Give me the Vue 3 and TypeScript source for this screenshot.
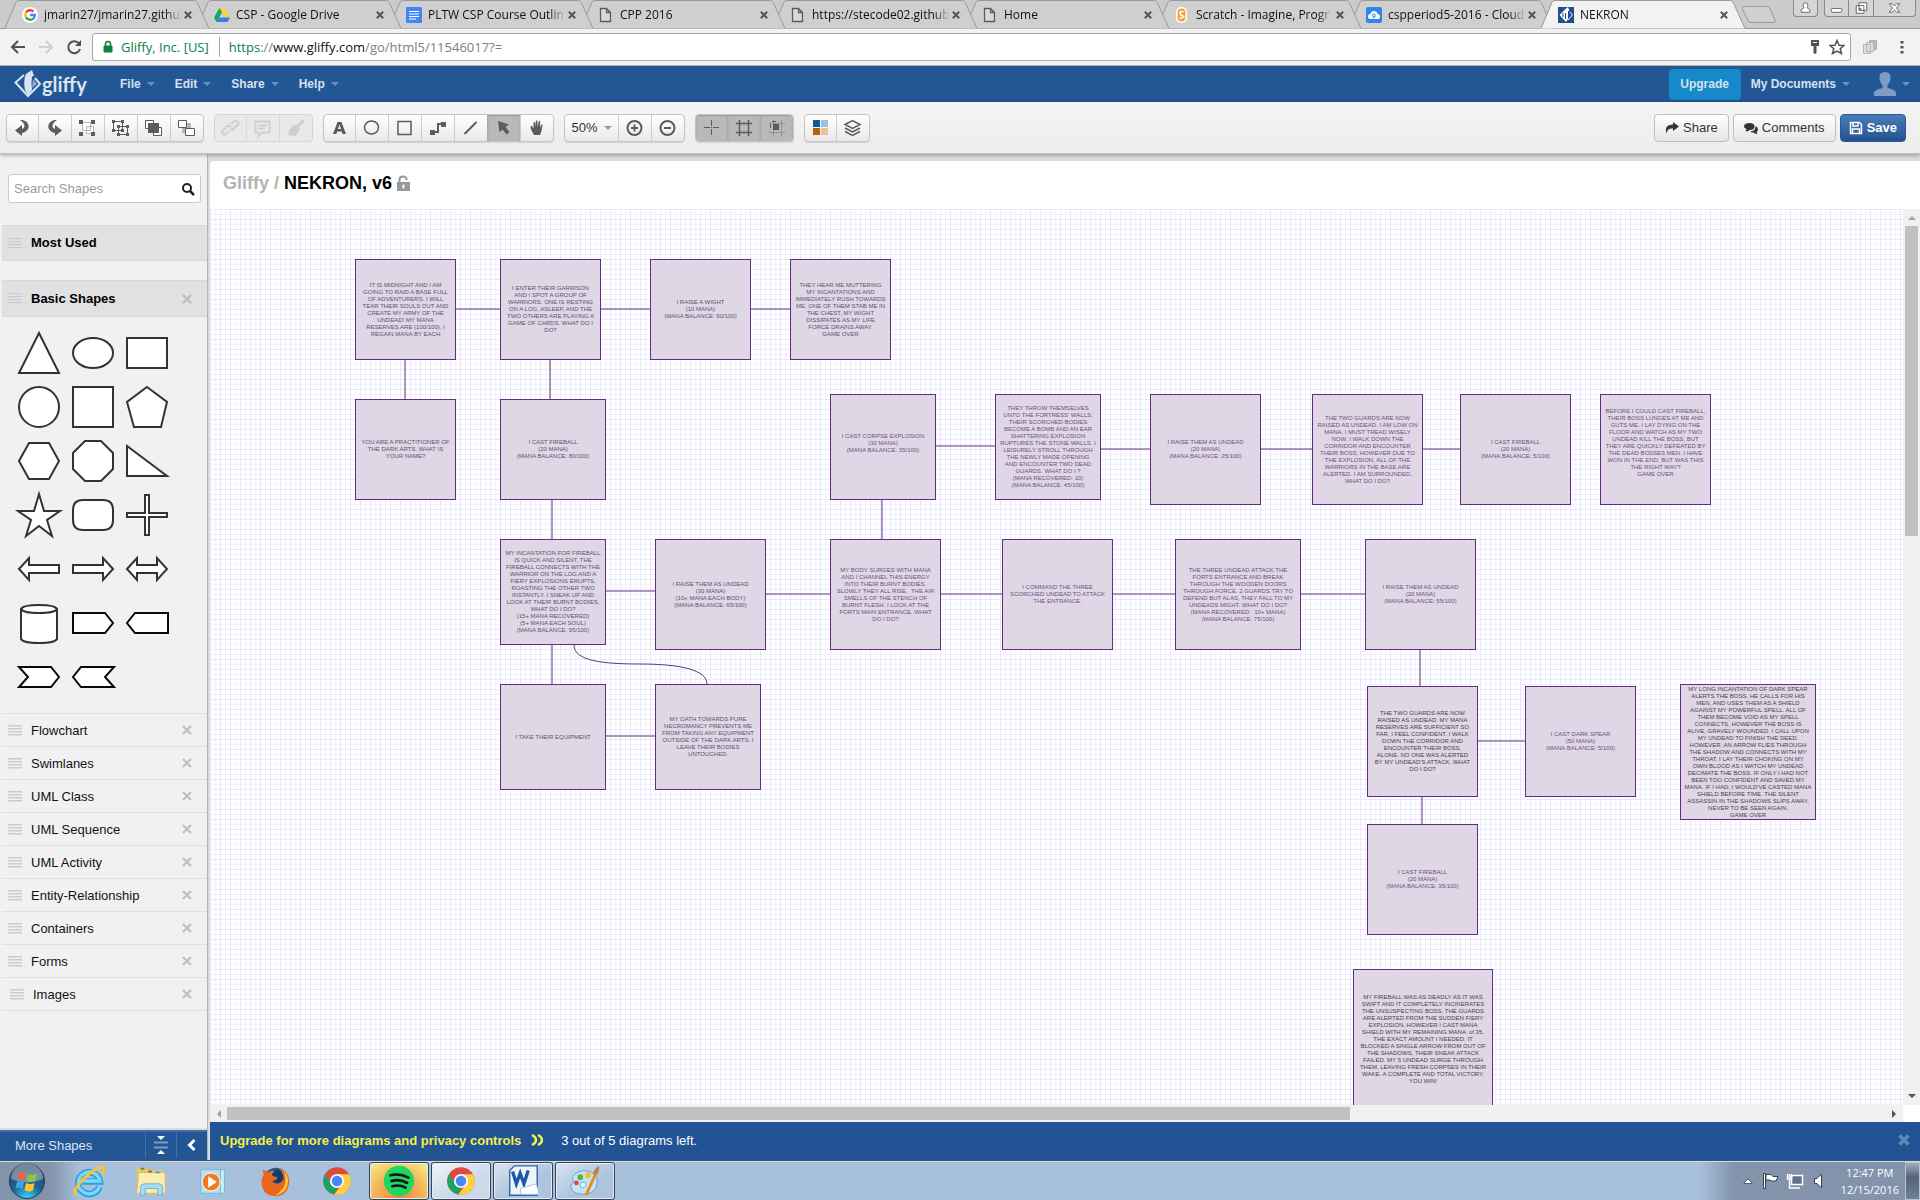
<script setup lang="ts">
interface Part { d: string; f?: string; s?: string; w?: number }
interface Tool { name: string; parts: Part[]; active?: boolean }
interface ToolGroup { name: string; disabled?: boolean; pressed?: boolean; zoom?: boolean; tools: Tool[] }
interface Node { x: number; y: number; w: number; h: number; tone: string; lines: string[] }

const G = '#5c5c5c'

const tabs = [
  { title: 'jmarin27/jmarin27.github', icon: 'google' },
  { title: 'CSP - Google Drive', icon: 'drive' },
  { title: 'PLTW CSP Course Outlin', icon: 'docs' },
  { title: 'CPP 2016', icon: 'page' },
  { title: 'https://stecode02.github', icon: 'page' },
  { title: 'Home', icon: 'page' },
  { title: 'Scratch - Imagine, Progr', icon: 'scratch' },
  { title: 'cspperiod5-2016 - Cloud', icon: 'cloud' },
  { title: 'NEKRON', icon: 'gliffy' },
]

const menus = ['File', 'Edit', 'Share', 'Help']

const groups: ToolGroup[] = [
  {
    name: 'Edit',
    tools: [
      { name: 'Undo', parts: [{ d: 'M14 6C23 5 27 16 16 19V22L9 16.500L16 11V15C20 14 19 9 14 6Z', f: G }] },
      { name: 'Redo', parts: [{ d: 'M19 6C10 5 6 16 17 19V22L24 16.500L17 11V15C13 14 14 9 19 6Z', f: G }] },
      { name: 'Group', parts: [{ d: 'M11.500 8.500H19.500V16.500H11.500ZM15.500 12.500H22.500V19.500H15.500Z', f: '#fff', s: '#b5b5b5' }, { d: 'M8 6H12V10H8ZM20 6H24V10H20ZM8 18H12V22H8ZM20 18H24V22H20Z', f: G }] },
      { name: 'Ungroup', parts: [{ d: 'M9.500 7.500H18.500V16.500H9.500ZM14.500 12.500H23.500V20.500H14.500Z', s: G }, { d: 'M8 6H11V9H8ZM17 6H20V9H17ZM8 15H11V18H8ZM17 15H20V18H17ZM13 11H16V14H13ZM22 11H25V14H22ZM13 19H16V22H13ZM22 19H25V22H22Z', f: G }] },
      { name: 'Bring to front', parts: [{ d: 'M8.500 6.500H16.500V14.500H8.500ZM16.500 13.500H24.500V21.500H16.500Z', f: '#fff', s: G }, { d: 'M11 9H22V19H11Z', f: G }] },
      { name: 'Send to back', parts: [{ d: 'M12 9H21V19H12Z', f: '#b5b5b5' }, { d: 'M8.500 6.500H16.500V13.500H8.500ZM15.500 14.500H24.500V21.500H15.500Z', f: '#fff', s: G }] },
    ],
  },
  {
    name: 'Attach',
    disabled: true,
    tools: [
      { name: 'Link', parts: [{ d: 'M15 17L12 20Q10 21.500 8.500 19.500T9.500 16L13 12.500Q15 11 17 13M17 10L20 7.500Q22.500 6 24 8T23 11.500L19.500 15Q17.500 16.500 16 14.500', s: '#cfcfcf', w: 2 }] },
      { name: 'Note', parts: [{ d: 'M9.500 7.500H23.500V18.500H16L12.500 22V18.500H9.500ZM12 11.500H21M12 14.500H19', s: '#cfcfcf', w: 2 }] },
      { name: 'Format painter', parts: [{ d: 'M24 5L26 7L20 13L21 16L16 22L9 21L8 20L11 19L9 18L14 11L18 11Z', f: '#cfcfcf' }] },
    ],
  },
  {
    name: 'Draw',
    tools: [
      { name: 'Text', parts: [{ d: 'M10 20L14.500 8H18.500L23 20H19.500L18.700 17.500H14.200L13.400 20ZM15 15H18L16.500 10.500Z', f: G }] },
      { name: 'Ellipse', parts: [{ d: 'M9.500 13.500A7 6.500 0 1 1 23.500 13.500A7 6.500 0 1 1 9.500 13.500Z', s: G, w: 1.5 }] },
      { name: 'Rectangle', parts: [{ d: 'M10 7.500H23V20.500H10Z', s: G, w: 1.5 }] },
      { name: 'Connector', parts: [{ d: 'M11 18H17V10H22', s: G, w: 2 }, { d: 'M9 16H14V21H9ZM20 8H25V13H20Z', f: G }] },
      { name: 'Line', parts: [{ d: 'M10.500 20L22.500 8', s: G, w: 2 }] },
      { name: 'Pointer', active: true, parts: [{ d: 'M11 7L22 10.500L18.500 13L22.500 18L19.500 20.500L15.500 15.500L12.500 18.500Z', f: G }] },
      { name: 'Pan', parts: [{ d: 'M14 21L11 15.500L10.500 12H12L13.500 14.500V8.500L15 8L15.800 13V6.500H17.300L17.800 13L18.800 7H20.200L20 13.500L21.500 10.500H22.700L21.500 17L20 21Z', f: G }] },
    ],
  },
  {
    name: 'Zoom',
    zoom: true,
    tools: [
      { name: 'Zoom in', parts: [{ d: 'M9.500 14A7 7 0 1 1 23.500 14A7 7 0 1 1 9.500 14ZM13 14H20M16.500 10.500V17.500', s: G, w: 2 }] },
      { name: 'Zoom out', parts: [{ d: 'M9.500 14A7 7 0 1 1 23.500 14A7 7 0 1 1 9.500 14ZM13 14H20', s: G, w: 2 }] },
    ],
  },
  {
    name: 'Guides',
    pressed: true,
    tools: [
      { name: 'Drawing guides', parts: [{ d: 'M9 13.500H15M18 13.500H24M16.500 6V12M16.500 15V21M16 13.500H17', s: G }] },
      { name: 'Grid', parts: [{ d: 'M9 9.500H25M9 18.500H25M12.500 6V22M21.500 6V22', s: G, w: 1.5 }] },
      { name: 'Snap to grid', parts: [{ d: 'M9 9.500H25M9 18.500H25M13.500 6V22M21.500 6V22', s: '#929292' }, { d: 'M13 10H19V16H13ZM12 7H16V8H12ZM10 10H11V14H10Z', f: G }] },
    ],
  },
  {
    name: 'Style',
    tools: [
      { name: 'Themes', parts: [{ d: 'M9 6H16V13H9Z', f: '#0b5a9d' }, { d: 'M17 6H24V13H17Z', f: '#9cc0dc' }, { d: 'M9 14H16V21H9Z', f: '#b75d0b' }, { d: 'M17 14H24V21H17Z', f: '#e5c299' }] },
      { name: 'Layers', parts: [{ d: 'M9 10.500L16.500 6.500L24 10.500L16.500 14.500ZM9 14L16.500 18L24 14M9 17.500L16.500 21.500L24 17.500', s: G, w: 1.5 }] },
    ],
  },
]

const shapes = [
  { name: 'Triangle', d: 'M27 7L47 47H7Z' },
  { name: 'Ellipse', d: 'M7 27A20 15 0 1 1 47 27A20 15 0 1 1 7 27Z' },
  { name: 'Rectangle', d: 'M7 12H47V42H7Z' },
  { name: 'Circle', d: 'M7 27A20 20 0 1 1 47 27A20 20 0 1 1 7 27Z' },
  { name: 'Square', d: 'M7 7H47V47H7Z' },
  { name: 'Pentagon', d: 'M27 7L47 22L41 47H14L7 22Z' },
  { name: 'Hexagon', d: 'M7 27L17 9H37L47 27L37 45H17Z' },
  { name: 'Octagon', d: 'M19 7H35L47 19V35L35 47H19L7 35V19Z' },
  { name: 'Right triangle', d: 'M7 12V42H47Z' },
  { name: 'Star', d: 'M27 6L32 23H48L35 32L40 48L27 38L14 48L19 32L6 23H22Z' },
  { name: 'Rounded rectangle', d: 'M17 12H37Q47 12 47 22V32Q47 42 37 42H17Q7 42 7 32V22Q7 12 17 12Z' },
  { name: 'Plus', d: 'M25 7H29V25H47V29H29V47H25V29H7V25H25Z' },
  { name: 'Left arrow', d: 'M7 27L17 16V23H47V31H17V38Z' },
  { name: 'Right arrow', d: 'M47 27L37 16V23H7V31H37V38Z' },
  { name: 'Double arrow', d: 'M7 27L17 16V23H37V16L47 27L37 38V31H17V38Z' },
  { name: 'Cylinder', d: 'M9 13V43Q11 47 27 47T45 43V13Q43 9 27 9T9 13Q11 17 27 17T45 13' },
  { name: 'Pointer right', d: 'M7 17H39L47 27L39 37H7Z', dark: true },
  { name: 'Pointer left', d: 'M15 17H48V37H15L7 27Z', dark: true },
  { name: 'Chevron right', d: 'M7 17H39L47 27L39 37H7L16 27Z', dark: true },
  { name: 'Chevron left', d: 'M15 17H48L39 27L48 37H15L7 27Z', dark: true },
]

const categories = ['Flowchart', 'Swimlanes', 'UML Class', 'UML Sequence', 'UML Activity', 'Entity-Relationship', 'Containers', 'Forms', 'Images']

/* Node and edge coordinates are relative to the canvas origin. */
const nodes: Node[] = [
  { x: 145, y: 50, w: 101, h: 101, tone: 'slate', lines: ['IT IS MIDNIGHT AND I AM', 'GOING TO RAID A BASE FULL', 'OF ADVENTURERS. I WILL', 'TEAR THEIR SOULS OUT AND', 'CREATE MY ARMY OF THE', 'UNDEAD! MY MANA', 'RESERVES ARE (100/100), I', 'REGAIN MANA BY EACH'] },
  { x: 290, y: 50, w: 101, h: 101, tone: 'slate', lines: ['I ENTER THEIR GARRISON', 'AND I SPOT A GROUP OF', 'WARRIORS. ONE IS RESTING', 'ON A LOG, ASLEEP, AND THE', 'TWO OTHERS ARE PLAYING A', 'GAME OF CARDS. WHAT DO I', 'DO?'] },
  { x: 440, y: 50, w: 101, h: 101, tone: 'slate', lines: ['I RAISE A WIGHT', '(10 MANA)', '(MANA BALANCE: 90/100)'] },
  { x: 580, y: 50, w: 101, h: 101, tone: 'slate', lines: ['THEY HEAR ME MUTTERING', 'MY INCANTATIONS AND', 'IMMEDIATELY RUSH TOWARDS', 'ME. ONE OF THEM STAB ME IN', 'THE CHEST, MY WIGHT', 'DISSIPATES AS MY LIFE', 'FORCE DRAINS AWAY.', 'GAME OVER'] },
  { x: 145, y: 190, w: 101, h: 101, tone: 'slate', lines: ['YOU ARE A PRACTITIONER OF', 'THE DARK ARTS. WHAT IS', 'YOUR NAME?'] },
  { x: 290, y: 190, w: 106, h: 101, tone: 'slate', lines: ['I CAST FIREBALL', '(20 MANA)', '(MANA BALANCE: 80/100)'] },
  { x: 620, y: 185, w: 106, h: 106, tone: 'plum', lines: ['I CAST CORPSE EXPLOSION', '(30 MANA)', '(MANA BALANCE: 35/100)', ''] },
  { x: 785, y: 185, w: 106, h: 106, tone: 'plum', lines: ['THEY THROW THEMSELVES', "UNTO THE FORTRESS' WALLS,", 'THEIR SCORCHED BODIES', 'BECOME A BOMB AND AN EAR', 'SHATTERING EXPLOSION', 'RUPTURES THE STONE WALLS. I', 'LEISURELY STROLL THROUGH', 'THE NEWLY MADE OPENING', 'AND ENCOUNTER TWO DEAD', 'GUARDS. WHAT DO I ?', '(MANA RECOVERED: 10)', '(MANA BALANCE: 45/100)'] },
  { x: 940, y: 185, w: 111, h: 111, tone: 'plum', lines: ['I RAISE THEM AS UNDEAD', '(20 MANA)', '(MANA BALANCE: 25/100)'] },
  { x: 1102, y: 185, w: 111, h: 111, tone: 'plum', lines: ['THE TWO GUARDS ARE NOW', 'RAISED AS UNDEAD. I AM LOW ON', 'MANA, I MUST TREAD WISELY', 'NOW. I WALK DOWN THE', 'CORRIDOR AND ENCOUNTER', 'THEIR BOSS, HOWEVER DUE TO', 'THE EXPLOSION, ALL OF THE', 'WARRIORS IN THE BASE ARE', 'ALERTED. I AM SURROUNDED,', 'WHAT DO I DO?'] },
  { x: 1250, y: 185, w: 111, h: 111, tone: 'plum', lines: ['I CAST FIREBALL', '(20 MANA)', '(MANA BALANCE: 5/100)'] },
  { x: 1390, y: 185, w: 111, h: 111, tone: 'plum', lines: ['BEFORE I COULD CAST FIREBALL,', 'THEIR BOSS LUNGES AT ME AND', 'GUTS ME. I LAY DYING ON THE', 'FLOOR AND WATCH AS MY TWO', 'UNDEAD KILL THE BOSS, BUT', 'THEY ARE QUICKLY DEFEATED BY', 'THE DEAD BOSSES MEN. I HAVE', 'WON IN THE END, BUT WAS THIS', 'THE RIGHT WAY?', 'GAME OVER', '', ''] },
  { x: 290, y: 330, w: 106, h: 106, tone: 'slate', lines: ['MY INCANTATION FOR FIREBALL', 'IS QUICK AND SILENT, THE', 'FIREBALL CONNECTS WITH THE', 'WARRIOR ON THE LOG AND A', 'FIERY EXPLOSIONS ERUPTS,', 'ROASTING THE OTHER TWO', 'INSTANTLY. I SNEAK UP AND', 'LOOK AT THEIR BURNT BODIES,', 'WHAT DO I DO?', '(15+ MANA RECOVERED)', '(5+ MANA EACH SOUL)', '(MANA BALANCE: 95/100)'] },
  { x: 445, y: 330, w: 111, h: 111, tone: 'slate', lines: ['I RAISE THEM AS UNDEAD', '(30 MANA)', '(10+ MANA EACH BODY)', '(MANA BALANCE: 65/100)'] },
  { x: 620, y: 330, w: 111, h: 111, tone: 'plum', lines: ['MY BODY SURGES WITH MANA', 'AND I CHANNEL THIS ENERGY', 'INTO THEIR BURNT BODIES.', 'SLOWLY THEY ALL RISE,  THE AIR', 'SMELLS OF THE STENCH OF', 'BURNT FLESH. I LOOK AT THE', 'FORTS MAIN ENTRANCE, WHAT', 'DO I DO?'] },
  { x: 792, y: 330, w: 111, h: 111, tone: 'plum', lines: ['I COMMAND THE THREE', 'SCORCHED UNDEAD TO ATTACK', 'THE ENTRANCE.'] },
  { x: 965, y: 330, w: 126, h: 111, tone: 'plum', lines: ['THE THREE UNDEAD ATTACK THE', 'FORTS ENTRANCE AND BREAK', 'THROUGH THE WOODEN DOORS', 'THROUGH FORCE. 2 GUARDS TRY TO', 'DEFEND BUT ALAS, THEY FALL TO MY', 'UNDEADS MIGHT. WHAT DO I DO?', '(MANA RECOVERED:  10+ MANA)', '(MANA BALANCE: 75/100)'] },
  { x: 1155, y: 330, w: 111, h: 111, tone: 'plum', lines: ['I RAISE THEM AS UNDEAD', '(20 MANA)', '(MANA BALANCE: 55/100)'] },
  { x: 290, y: 475, w: 106, h: 106, tone: 'slate', lines: ['I TAKE THEIR EQUIPMENT'] },
  { x: 445, y: 475, w: 106, h: 106, tone: 'slate', lines: ['MY OATH TOWARDS PURE', 'NECROMANCY PREVENTS ME', 'FROM TAKING ANY EQUIPMENT', 'OUTSIDE OF THE DARK ARTS. I', 'LEAVE THEIR BODIES', 'UNTOUCHED.'] },
  { x: 1157, y: 477, w: 111, h: 111, tone: 'ink', lines: ['THE TWO GUARDS ARE NOW', 'RAISED AS UNDEAD. MY MANA', 'RESERVES ARE SUFFICIENT SO', 'FAR, I FEEL CONFIDENT. I WALK', 'DOWN THE CORRIDOR AND', 'ENCOUNTER THEIR BOSS,', 'ALONE. NO ONE WAS ALERTED', "BY MY UNDEAD'S ATTACK. WHAT", 'DO I DO?'] },
  { x: 1315, y: 477, w: 111, h: 111, tone: 'plum', lines: ['I CAST DARK SPEAR', '(50 MANA)', '(MANA BALANCE: 5/100)'] },
  { x: 1470, y: 475, w: 136, h: 136, tone: 'ink', lines: ['MY LONG INCANTATION OF DARK SPEAR', 'ALERTS THE BOSS. HE CALLS FOR HIS', 'MEN, AND USES THEM AS A SHIELD', 'AGAINST MY POWERFUL SPELL. ALL OF', 'THEM BECOME VOID AS MY SPELL', 'CONNECTS, HOWEVER THE BOSS IS', 'ALIVE, GRAVELY WOUNDED. I CALL UPON', 'MY UNDEAD TO FINISH THE DEED.', 'HOWEVER, AN ARROW FLIES THROUGH', 'THE SHADOW AND CONNECTS WITH MY', 'THROAT. I LAY THEIR CHOKING ON MY', 'OWN BLOOD AS I WATCH MY UNDEAD', 'DECIMATE THE BOSS. IF ONLY I HAD NOT', 'BEEN TOO CONFIDENT AND SAVED MY', "MANA. IF I HAD, I WOULD'VE CASTED MANA", 'SHIELD BEFORE TIME. THE SILENT', 'ASSASSIN IN THE SHADOWS SLIPS AWAY,', 'NEVER TO BE SEEN AGAIN.', 'GAME OVER'] },
  { x: 1157, y: 615, w: 111, h: 111, tone: 'plum', lines: ['I CAST FIREBALL', '(20 MANA)', '(MANA BALANCE: 35/100)'] },
  { x: 1143, y: 760, w: 140, h: 140, tone: 'ink', lines: ['MY FIREBALL WAS AS DEADLY AS IT WAS', 'SWIFT AND IT COMPLETELY INCINERATES', 'THE UNSUSPECTING BOSS. THE GUARDS', 'ARE ALERTED FROM THE SUDDEN FIERY', 'EXPLOSION, HOWEVER I CAST MANA', 'SHIELD WITH MY REMAINING MANA  of 35.', 'THE EXACT AMOUNT I NEEDED. IT', 'BLOCKED A SINGLE ARROW FROM OUT OF', 'THE SHADOWS, THEIR SNEAK ATTACK', 'FAILED. MY 5 UNDEAD SURGE THROUGH', 'THEM, LEAVING FRESH CORPSES IN THEIR', 'WAKE. A COMPLETE AND TOTAL VICTORY.', 'YOU WIN!'] },
]

const edges = [
  'M246 100H290', 'M391 100H440', 'M541 100H580', 'M195 151V190', 'M340 151V190', 'M342 291V330',
  'M726 237H785', 'M891 240H940', 'M1051 240H1102', 'M1213 240H1250', 'M672 291V330',
  'M396 382H445', 'M556 385H620', 'M731 385H792', 'M903 385H965', 'M1091 385H1155',
  'M342 436V475', 'M364 436C364 452 393 455 430 455C471 455 497 461 497 475', 'M396 527H445',
  'M1210 441V477', 'M1212 588V615', 'M1268 532H1315',
]
</script>

<template>
  <div class="screen">
    <header class="browser">
      <div class="tab-strip">
        <div v-for="(t, i) in tabs" :key="t.title" class="tab" :class="{ current: i === 8 }" :style="{ zIndex: i === 8 ? 20 : 10 - i }">
          <svg class="tab-shape" viewBox="0 0 204 29" preserveAspectRatio="none"><path d="M0 28.500L11 2Q12 .5 14 .5H189Q191 .5 192 2L204 28.500" /></svg>
          <svg v-if="t.icon === 'google'" class="fav" viewBox="0 0 16 16"><circle cx="8" cy="8" r="8" fill="#fff" /><g fill="none" stroke-width="2.400"><path d="M4 5.500A5 5 0 0 1 11.500 4.500" stroke="#ea4335" /><path d="M4 5.500A5 5 0 0 0 4 10.500" stroke="#fbbc05" /><path d="M4 10.500A5 5 0 0 0 11.300 11.600" stroke="#34a853" /><path d="M8 8H12.800Q12.700 10.500 11.300 11.600" stroke="#4285f4" /></g></svg>
          <svg v-else-if="t.icon === 'drive'" class="fav" viewBox="0 0 16 16"><path d="M5.500 1H10.500L16 10.500H11Z" fill="#ffcf48" /><path d="M5.500 1L8 5.500L2.600 15L0 10.500Z" fill="#11a861" /><path d="M5.200 10.500H16L13.500 15H2.600Z" fill="#3b7de8" /></svg>
          <svg v-else-if="t.icon === 'docs'" class="fav" viewBox="0 0 16 16"><rect width="16" height="16" rx="1" fill="#4285f4" /><path d="M3 4.500H13M3 7H13M3 9.500H13M3 12H10" stroke="#fff" /></svg>
          <svg v-else-if="t.icon === 'page'" class="fav" viewBox="0 0 16 16"><path d="M2.500 1.500H8.500L12.500 5.500V14.500H2.500ZM8.500 1.500V5.500H12.500" fill="#d8d8d8" stroke="#5a5a5a" stroke-width="1.300" /></svg>
          <svg v-else-if="t.icon === 'scratch'" class="fav" viewBox="0 0 16 16"><rect x="2" width="11" height="16" rx="5" fill="#fff" /><rect x="3.500" y="1.500" width="8" height="13" rx="4" fill="#f7a236" /><path d="M9.500 5Q6 3.500 6 6T9 9T5.500 11.500" fill="none" stroke="#fff" stroke-width="1.500" /></svg>
          <svg v-else-if="t.icon === 'cloud'" class="fav" viewBox="0 0 16 16"><rect width="16" height="16" rx="2" fill="#2c86ec" /><path d="M4 12Q1.500 11.500 2 9T4.500 7Q5 4 8 4T11.500 7Q14 7 14 9.500T12 12Z" fill="#fff" /><path d="M9 9.500A1.500 1.500 0 1 1 9 7.500V9.500L7.500 11.500" fill="none" stroke="#2c86ec" /></svg>
          <svg v-else class="fav" viewBox="0 0 16 16"><rect width="16" height="16" fill="#1d4f91" /><path d="M7.500 2L10 0L11.500 4H10V12L8 15L1.500 8Z" fill="#fff" /><path d="M12 5L14.500 8L10 13" fill="none" stroke="#fff" /><path d="M5 6V10M7.500 6V12" stroke="#1d4f91" /></svg>
          <button class="tab-title">{{ t.title }}</button>
          <button class="tab-close" aria-label="Close tab"><svg viewBox="0 0 8 8"><path d="M.8 .8L7.200 7.200M7.200 .8L.8 7.200" /></svg></button>
        </div>
        <button class="new-tab" aria-label="New tab"><svg viewBox="0 0 36 19"><path d="M4 1.500H26Q28 1.500 29 3.500L34 15Q35 17.500 32 17.500H10Q8 17.500 7 15.500L1.500 4Q1 1.500 4 1.500Z" /></svg></button>
        <div class="window-buttons">
          <button class="wb user" aria-label="Profile"><svg viewBox="0 0 24 16"><path d="M7.500 12.500V10L10.500 7.500Q9.500 6.500 9.500 5Q9.500 2.500 12 2.500T14.500 5Q14.500 6.500 13.500 7.500L16.500 10V12.500Z" fill="#fff" stroke="#666" /></svg></button>
          <div class="wb-set">
            <button class="wb" aria-label="Minimize"><svg viewBox="0 0 24 16"><rect x="6.500" y="8.500" width="11" height="4" rx="1" fill="#fff" stroke="#666" /></svg></button>
            <button class="wb" aria-label="Restore"><svg viewBox="0 0 24 16"><path d="M9.500 2.500H17.500V10.500H9.500ZM6.500 5.500H14.500V13.500H6.500ZM9.500 8.500H11.500V10.500H9.500Z" fill="#fff" stroke="#666" /></svg></button>
            <button class="wb wide" aria-label="Close"><svg viewBox="0 0 24 16"><path d="M6.500 3.500H9.500L12 6L14.500 3.500H17.500L14 8L17.500 12.500H14.500L12 10L9.500 12.500H6.500L10 8Z" fill="#fff" stroke="#666" /></svg></button>
          </div>
        </div>
      </div>
      <div class="address-row">
        <button class="nav" aria-label="Back"><svg viewBox="0 0 16 16"><path d="M15 8H2M8 2L2 8L8 14" stroke="#505050" stroke-width="2" fill="none" /></svg></button>
        <button class="nav" aria-label="Forward"><svg viewBox="0 0 16 16"><path d="M1 8H14M8 2L14 8L8 14" stroke="#cfcfcf" stroke-width="2" fill="none" /></svg></button>
        <button class="nav" aria-label="Reload"><svg viewBox="0 0 16 16"><path d="M13 4.500A6 6 0 1 0 14 10" stroke="#505050" stroke-width="2" fill="none" /><path d="M15 1V7H9Z" fill="#505050" /></svg></button>
        <div class="omnibox">
          <svg class="lock" viewBox="0 0 10 14"><path d="M1 6H9V12H1Z" fill="#0b8043" stroke="#0b8043" /><path d="M2.500 6V4Q2.500 1.500 5 1.500T7.500 4V6" fill="none" stroke="#0b8043" stroke-width="1.500" /></svg>
          <span class="cert">Gliffy, Inc. [US]</span>
          <span class="url"><span class="https">https</span>://<span class="host">www.gliffy.com</span>/go/html5/11546017?=</span>
          <svg class="omni-icon" viewBox="0 0 16 16"><path d="M4 1H12V7H9.500V14L8 15L6.500 14V7H4Z" fill="#505050" /><path d="M6 3.500H10" stroke="#fff" /></svg>
          <svg class="omni-icon" viewBox="0 0 16 16"><path d="M8 1.500L10 6.200L15 6.500L11.200 9.800L12.500 14.500L8 12L3.500 14.500L4.800 9.800L1 6.500L6 6.200Z" fill="none" stroke="#505050" stroke-width="1.500" /></svg>
        </div>
        <svg class="ext" viewBox="0 0 16 16"><path d="M7.500 1.500H14.500V10.500H7.500Z" fill="#b9b9b9" stroke="#b0b0b0" /><path d="M4.500 3.500H11.500V12.500H4.500ZM1.500 5.500H8.500V14.500H1.500Z" fill="#ddd" stroke="#b5b5b5" /></svg>
        <button class="nav dots" aria-label="Menu"><svg viewBox="0 0 16 16"><path d="M6.500 2H9.500V4.500H6.500ZM6.500 7H9.500V9.500H6.500ZM6.500 12H9.500V14.500H6.500Z" fill="#505050" /></svg></button>
      </div>
    </header>

    <nav class="app-bar">
      <div class="logo">
        <svg viewBox="0 0 28 28"><path d="M10 5L1.500 12.500L14 26L26 14L21 8" fill="none" stroke="#dbe5f1" stroke-width="2" /><path d="M12 4L18 0L20 6L18 6.500Q17 12 18 20L14 25L11 20Q9 10 12 4Z" fill="#dbe5f1" /><path d="M19 9L23 14L18 18Z" fill="#8ea9cf" /></svg>
        <span>gliffy</span>
      </div>
      <button v-for="m in menus" :key="m" class="menu">{{ m }}<i class="caret"></i></button>
      <span class="spring"></span>
      <button class="upgrade">Upgrade</button>
      <button class="menu docs">My Documents<i class="caret"></i></button>
      <button class="menu account" aria-label="Account"><svg viewBox="0 0 22 24"><path d="M11 0Q17 0 16.500 6Q16 11 13.500 13V16Q22 18 22 21V24H0V21Q0 18 8.500 16V13Q6 11 5.500 6Q5 0 11 0Z" fill="#7f9bc6" /></svg><i class="caret"></i></button>
    </nav>

    <div class="toolbar">
      <div v-for="g in groups" :key="g.name" class="group" :class="{ disabled: g.disabled, pressed: g.pressed }">
        <button v-if="g.zoom" class="tool zoom">50%<i class="caret dark"></i></button>
        <button v-for="t in g.tools" :key="t.name" class="tool" :class="{ active: t.active }" :aria-label="t.name" :disabled="g.disabled">
          <svg viewBox="0 0 33 28"><path v-for="(p, k) in t.parts" :key="k" :d="p.d" :fill="p.f ?? 'none'" fill-rule="evenodd" :stroke="p.s ?? 'none'" :stroke-width="p.w ?? 1" /></svg>
        </button>
      </div>
      <span class="spring"></span>
      <button class="action"><svg viewBox="0 0 14 14"><path d="M8 1L14 5.500L8 10V7.500Q2 7 1.500 12.500Q-1.500 4 8 3.500Z" fill="#333" /></svg>Share</button>
      <button class="action"><svg viewBox="0 0 14 14"><path d="M5.500 2Q10.500 2 10.500 5.500T5.500 9Q4 10.500 1.500 10.500L2.500 8Q0 7 0 5.500Q0 2 5.500 2Z" fill="#333" /><path d="M11.500 5Q14 6 14 8.500Q14 10 12.500 11L13.500 13Q11 13 9.500 11.500Q7 11.500 6 10.500Q12 10 11.500 5Z" fill="#333" /></svg>Comments</button>
      <button class="action save"><svg viewBox="0 0 14 14"><path d="M1.500 1.500H10.500L12.500 3.500V12.500H1.500ZM4 1.500V5H9V1.500M3.500 12.500V8H10.500V12.500" fill="none" stroke="#fff" stroke-width="1.500" /></svg>Save</button>
    </div>

    <div class="work">
      <aside class="side">
        <div class="side-body">
          <div class="search"><input type="text" placeholder="Search Shapes" aria-label="Search Shapes" /><svg viewBox="0 0 14 14"><circle cx="6" cy="6" r="4" fill="none" stroke="#222" stroke-width="2" /><path d="M9 9L13 13" stroke="#222" stroke-width="2.500" /></svg></div>
          <div class="section"><i class="grip"></i><h2>Most Used</h2></div>
          <div class="section second"><i class="grip"></i><h2>Basic Shapes</h2><button class="remove" aria-label="Remove Basic Shapes"><svg viewBox="0 0 10 10"><path d="M1 1L9 9M9 1L1 9" /></svg></button></div>
          <div class="shapes">
            <button v-for="s in shapes" :key="s.name" :aria-label="s.name"><svg viewBox="0 0 54 54"><path :d="s.d" fill="#fff" :stroke="s.dark ? '#0a0a0a' : '#333'" stroke-width="2" /></svg></button>
          </div>
          <ul class="cats">
            <li v-for="c in categories" :key="c"><i class="grip"></i><span>{{ c }}</span><button class="remove" :aria-label="'Remove ' + c"><svg viewBox="0 0 10 10"><path d="M1 1L9 9M9 1L1 9" /></svg></button></li>
          </ul>
        </div>
        <div class="more">
          <button class="more-label">More Shapes</button>
          <button class="more-icon" aria-label="Collapse all"><svg viewBox="0 0 14 18"><path d="M3 0H11L7 4ZM3 18H11L7 14Z" fill="#fff" /><path d="M0 6.500H14M0 11.500H14" stroke="#7d9bc6" stroke-width="2" /></svg></button>
          <button class="more-icon" aria-label="Hide panel"><svg viewBox="0 0 14 18"><path d="M9.500 4L4.500 9L9.500 14" fill="none" stroke="#fff" stroke-width="3" /></svg></button>
        </div>
      </aside>

      <main class="doc">
        <h1><span>Gliffy /</span> NEKRON, v6 <svg viewBox="0 0 13 16"><path d="M2.500 8V4.500Q2.500 1.500 6 1.500T9.500 4V5" fill="none" stroke="#999" stroke-width="2" /><path d="M0 7H13V16H0Z" fill="#999" /><path d="M6 10H7V13H6Z" fill="#fff" stroke="#fff" /></svg></h1>
        <div class="view">
          <div class="canvas">
            <svg class="edges"><path v-for="e in edges" :key="e" :d="e" /></svg>
            <div v-for="(n, i) in nodes" :key="i" class="node" :class="n.tone" :style="{ left: n.x + 'px', top: n.y + 'px', width: n.w + 'px', height: n.h + 'px' }">
              <div v-for="(l, k) in n.lines" :key="k" class="line">{{ l }}</div>
            </div>
          </div>
          <div class="vbar"><i class="arrow up"></i><div class="vthumb"></div><i class="arrow down"></i></div>
        </div>
        <div class="hbar"><i class="arrow left"></i><div class="htrack"><div class="hthumb"></div></div><i class="arrow right"></i><span class="corner"></span></div>
        <div class="promo">
          <a href="#">Upgrade for more diagrams and privacy controls <svg viewBox="0 0 12 12"><path d="M1 1Q5 3 5 6T1 11M7 1Q11 3 11 6T7 11" fill="none" stroke="#f3f04f" stroke-width="2.500" /></svg></a>
          <span>3 out of 5 diagrams left.</span>
          <button aria-label="Dismiss"><svg viewBox="0 0 12 12"><path d="M1.500 1.500L10.500 10.500M10.500 1.500L1.500 10.500" stroke="#6386b9" stroke-width="3.500" /></svg></button>
        </div>
      </main>
    </div>

    <footer class="taskbar">
      <button class="start" aria-label="Start">
        <svg viewBox="0 0 38 38"><defs><radialGradient id="orb" cx=".5" cy="1" r=".9"><stop offset="0" stop-color="#3fd6fb" /><stop offset=".5" stop-color="#1a6594" /><stop offset="1" stop-color="#2c4a66" /></radialGradient></defs><circle cx="19" cy="19" r="17.500" fill="url(#orb)" stroke="#1d3850" /><path d="M3 17A16 16 0 0 1 35 17Q19 24 3 17Z" fill="#fff" opacity=".35" /><path d="M11 11Q15 9 18 11L16.500 18Q13 16.500 9.500 18Z" fill="#f0663a" /><path d="M20 12Q24 14 29 11.500L27 19Q23 21 18.500 19Z" fill="#8ec642" /><path d="M9 20Q12.500 18.500 16 20L14.500 27Q11 25 7.500 26.500Z" fill="#3ea3ee" /><path d="M18 21Q22 23 26.500 21L25 28.500Q20 30.500 16.500 28Z" fill="#fdc62f" /></svg>
      </button>
      <button class="task" aria-label="Internet Explorer"><svg viewBox="0 0 38 38"><path d="M30 25A11.500 11.500 0 1 1 30.500 19.500H12" fill="none" stroke="#2f9fdc" stroke-width="7" /><path d="M30 25A11.500 11.500 0 1 1 30.500 19H12" fill="none" stroke="#79d8fb" stroke-width="3.500" /><path d="M5 34Q1 30 12 18T34 4Q36 7 33 13" fill="none" stroke="#f5c431" stroke-width="3" /></svg></button>
      <button class="task" aria-label="Explorer"><svg viewBox="0 0 38 38"><path d="M4 7Q4 5 6 5H14L16 8H32V11H34V31H4Z" fill="#e8c966" /><path d="M6 10H34V32H4Z" fill="#faeeae" stroke="#d9b95d" /><path d="M8 5H12V7H8Z" fill="#2fa043" /><path d="M16 8H20V10H16Z" fill="#d14a38" /><path d="M24 9H28V11H24Z" fill="#3e97d9" /><path d="M8 34V25Q8 22 12 22H28Q31 22 31 25V34H26V27H13V34Z" fill="#a8dcf1" stroke="#69b1d4" /></svg></button>
      <button class="task" aria-label="Media Player"><svg viewBox="0 0 38 38"><path d="M20 7H31V32H14Z" fill="#d5ecf8" stroke="#6eb7d8" /><path d="M6 7H27V32H6Z" fill="#b9def2" stroke="#6eb7d8" /><circle cx="17" cy="20" r="9.500" fill="#f37b1f" stroke="#fff" /><path d="M14 14L23 20L14 26Z" fill="#fff" /></svg></button>
      <button class="task" aria-label="Firefox"><svg viewBox="0 0 38 38"><circle cx="20" cy="18" r="13" fill="#1d5f9d" /><circle cx="21" cy="14" r="7" fill="#0e3c6e" /><path d="M6 7Q9 7 11 10Q16 7 19 9Q14 12 17 14L22 15Q20 19 16 19Q20 24 26 20Q30 17 27 12Q26 8 23 5Q34 9 34 20Q33 34 20 35Q6 35 5 22Q4 17 7 13Z" fill="#e8661b" /><path d="M27 7Q35 14 32 24Q29 33 19 34Q31 28 30 17Q30 11 27 7Z" fill="#ffc83a" /></svg></button>
      <button v-for="n in [0, 2]" :key="n" class="task chrome" :class="{ open: n === 2, lit: n === 2 }" aria-label="Chrome"><svg viewBox="0 0 38 38"><circle cx="19" cy="19" r="14.500" fill="#dd4b3e" /><path d="M6.500 11.500L13 22L19 27L16 33.200A14.500 14.500 0 0 1 6.500 11.500Z" fill="#1da261" /><path d="M19 12H31.800A14.500 14.500 0 0 1 16 33.200L24 23Z" fill="#ffce44" /><circle cx="19" cy="19" r="7.500" fill="#f5f5f5" /><circle cx="19" cy="19" r="5.500" fill="#4487f5" /></svg></button>
      <button class="task open spotify" aria-label="Spotify"><svg viewBox="0 0 38 38"><circle cx="19" cy="19" r="16" fill="#1fd662" /><path d="M10 13Q20 10.500 29 15.500M11 19Q20 16.500 27.500 21M12 24.500Q19.500 22.500 26 26" fill="none" stroke="#10141a" stroke-width="2.800" stroke-linecap="round" /></svg></button>
      <button class="task open" aria-label="Word"><svg viewBox="0 0 38 38"><path d="M10 3H34V34H5V8Z" fill="#eef4fc" stroke="#2867ac" stroke-width="1.500" /><path d="M8 9L12 22L16 11L20 22L24.500 8" fill="none" stroke="#1b59a6" stroke-width="3.500" /><path d="M16 27L33 22L36 33H17Z" fill="#fff" stroke="#a9bfdd" /></svg></button>
      <button class="task open" aria-label="Paint"><svg viewBox="0 0 38 38"><path d="M18 8Q32 9 32 20Q31 33 17 33Q5 33 4 25Q4 21 9 20Q3 17 8 12Q12 8 18 8Z" fill="#c5e4f3" stroke="#5ba1c8" /><circle cx="14" cy="15" r="3" fill="#57b246" /><circle cx="22" cy="13" r="3" fill="#f2c230" /><circle cx="10" cy="21" r="2.500" fill="#dd4b3e" /><circle cx="17" cy="23" r="3" fill="#fff" stroke="#5ba1c8" /><path d="M20 34L30 12" stroke="#e88c22" stroke-width="3" /><path d="M28 12Q27 7 34 3Q35 9 31 13Z" fill="#b78455" /></svg></button>
      <span class="spring"></span>
      <div class="tray">
        <svg class="tray-up" viewBox="0 0 10 6"><path d="M.5 5.500L5 1L9.500 5.500Z" fill="#fff" stroke="#56657a" /></svg>
        <svg viewBox="0 0 18 18"><path d="M1.500 1.500H3.500V16.500H1.500Z" fill="#fff" stroke="#33404f" /><path d="M4 2.500H9L11 4.500H16L14 9H9L8 8H4Z" fill="#fff" stroke="#33404f" /></svg>
        <svg viewBox="0 0 18 18"><path d="M5.500 3.500H16.500V12.500H5.500Z" fill="#617287" stroke="#fff" stroke-width="1.500" /><path d="M9 16H14M3.500 8V16H9" stroke="#fff" stroke-width="1.500" fill="none" /><path d="M1.500 2V7H5.500V2M3.500 2V6" stroke="#fff" fill="none" stroke-width="1.500" /></svg>
        <svg viewBox="0 0 18 18"><path d="M4.500 6.500H7L11.500 2V16L7 11.500H4.500Z" fill="#fff" stroke="#33404f" /></svg>
        <time>12:47 PM<br />12/15/2016</time>
      </div>
      <button class="peek" aria-label="Show desktop"></button>
    </footer>
  </div>
</template>

<style>
body { margin: 0; }
</style>

<style scoped>
.screen { display: flex; flex-direction: column; height: 100vh; min-height: 700px; overflow: hidden; background: #f1f1f1; font-family: "Liberation Sans", Arial, sans-serif; font-size: 13px; color: #333; }
.screen * { box-sizing: border-box; }
button { border: 0; padding: 0; margin: 0; background: none; font: inherit; color: inherit; }
svg { display: block; flex: none; }
h1, h2, ul { margin: 0; padding: 0; list-style: none; }
.spring { flex: 1; }

.browser { flex: none; font-family: "Open Sans", "Noto Sans", sans-serif; }
.tab-strip { display: flex; height: 29px; padding-left: 5px; background: #cbcbcb; border-bottom: 1px solid #9a9a9a; }
.tab { position: relative; display: flex; align-items: center; flex: 0 1 204px; min-width: 0; height: 29px; margin-right: -12px; padding: 0 17px; isolation: isolate; }
.tab-shape { position: absolute; left: 0; top: 0; width: 100%; height: 29px; z-index: -1; }
.tab-shape path { fill: #cfcfcf; stroke: #999; }
.tab.current .tab-shape path { fill: #f2f2f2; }
.fav { width: 16px; height: 16px; }
.tab-title { flex: 1; min-width: 0; margin-left: 6px; overflow: hidden; white-space: nowrap; text-align: left; font-size: 12px; line-height: 20px; color: #111; -webkit-mask-image: linear-gradient(90deg, #000 88%, transparent); mask-image: linear-gradient(90deg, #000 88%, transparent); }
.tab-close { width: 8px; height: 16px; margin-left: 2px; padding: 4px 0; }
.tab-close svg { width: 8px; height: 8px; }
.tab-close path { stroke: #555; stroke-width: 2; }
.new-tab { align-self: center; margin-left: 8px; }
.new-tab svg { width: 36px; height: 19px; fill: #d0d0d0; stroke: #999; }
.window-buttons { display: flex; gap: 6px; height: 17px; margin: 0 4px 0 auto; }
.wb { width: 25px; height: 17px; border: 1px solid #8a8a8a; border-top: 0; background: #d5d5d5; }
.wb svg { width: 23px; height: 16px; margin: auto; }
.wb.user { border-radius: 0 0 4px 4px; }
.wb-set { display: flex; }
.wb-set .wb + .wb { border-left: 0; }
.wb-set .wb:first-child { border-radius: 0 0 0 4px; }
.wb.wide { width: 42px; border-radius: 0 0 4px 0; }
.address-row { display: flex; align-items: center; height: 37px; padding: 0 10px; background: #f2f2f2; border-bottom: 1px solid #b2b2b2; }
.nav { width: 16px; margin-right: 12px; }
.nav svg { width: 16px; height: 16px; }
.omnibox { display: flex; align-items: center; flex: 1; height: 28px; margin-right: 11px; margin-left: -2px; padding: 0 5px 0 10px; border: 1px solid #a8a8a8; border-radius: 3px; background: #fff; font-size: 13px; line-height: 20px; color: #808080; }
.lock { width: 10px; height: 14px; margin-right: 8px; }
.cert { color: #0b8043; padding-right: 10px; border-right: 1px solid #aaa; }
.url { flex: 1; padding-left: 9px; white-space: nowrap; }
.https { color: #0b8043; }
.host { color: #111; }
.omni-icon { width: 16px; height: 16px; margin-left: 6px; }
.ext { width: 16px; height: 16px; margin-right: 16px; }
.dots { margin-right: 0; }

.app-bar { display: flex; align-items: center; flex: none; height: 36px; padding: 0 10px 0 14px; background: #235695; color: #d6e1ef; font-size: 12px; font-weight: 700; }
.logo { display: flex; align-items: center; width: 106px; }
.logo svg { width: 28px; height: 28px; }
.logo span { font: 700 20px/24px Lato, sans-serif; color: #dbe5f1; }
.menu { display: flex; align-items: center; margin-right: 20px; }
.menu.docs { margin-right: 24px; }
.caret { width: 0; border: 4px solid transparent; border-top-color: #6f8fbe; border-bottom: 0; margin-left: 6px; }
.caret.dark { border-top-color: #999; }
.upgrade { width: 72px; height: 31px; margin-right: 10px; border-radius: 4px; background: #1689ca; }
.menu.account { margin: 0; }
.account svg { width: 22px; height: 24px; }

.toolbar { position: relative; display: flex; align-items: center; flex: none; height: 52px; gap: 10px; padding: 0 14px 0 6px; background: linear-gradient(#f5f5f5, #ececec); border-bottom: 1px solid #c4c4c4; box-shadow: 0 1px 4px rgba(0, 0, 0, 0.35); z-index: 2; }
.group { display: flex; height: 28px; border: 1px solid #c3c3c3; border-radius: 4px; overflow: hidden; background: linear-gradient(#fff, #e9e9e9); box-shadow: 0 1px 1px rgba(0, 0, 0, 0.1); }
.tool { width: 33px; height: 26px; border-left: 1px solid #ccc; }
.tool:first-child { border-left: 0; width: 31px; }
.tool svg { width: 33px; height: 28px; margin: -1px; }
.tool.zoom { display: flex; align-items: center; justify-content: center; width: 53px; }
.tool.active, .pressed .tool { background: #b9b9b9; border-color: #a9a9a9; box-shadow: inset 0 1px 2px rgba(0, 0, 0, 0.15); }
.disabled { background: #e9e9e9; border-color: #d5d5d5; box-shadow: none; }
.disabled .tool { border-color: #d9d9d9; }
.action { display: flex; align-items: center; gap: 4px; height: 28px; padding: 0 10px; border: 1px solid #bfbfbf; border-radius: 4px; background: linear-gradient(#fff, #e6e6e6); }
.action + .action { margin-left: -6px; }
.action svg { width: 14px; height: 14px; }
.action.save { padding: 0 8px; border-color: #2a5b98; background: linear-gradient(#4a7db9, #23518f); color: #fff; font-weight: 700; }

.work { display: flex; flex: 1; min-height: 0; background: #dcdcdc; }
.side { display: flex; flex-direction: column; flex: none; width: 208px; border-right: 1px solid #b5b5b5; background: #f1f1f1; }
.side-body { flex: 1; overflow: hidden; padding-left: 2px; }
.search { display: flex; align-items: center; height: 29px; margin: 20px 6px 22px; padding: 0 5px; border: 1px solid #ccc; border-radius: 3px; background: #fff; }
.search input { flex: 1; min-width: 0; border: 0; padding: 0; outline: 0; background: none; font: inherit; color: #333; }
.search input::placeholder { color: #9b9b9b; opacity: 1; }
.search svg { width: 14px; height: 14px; }
.section { display: flex; align-items: center; height: 36px; padding: 0 15px 0 6px; border-top: 1px solid #d9d9d9; border-bottom: 1px solid #d9d9d9; background: #e1e1e1; color: #000; }
.section.second { margin-top: 19px; height: 37px; }
.section h2 { flex: 1; font-size: 13px; line-height: 18px; }
.grip { width: 14px; height: 11px; margin-right: 9px; background: repeating-linear-gradient(#cbcbcb 0 1px, #dedede 1px 2px, transparent 2px 3px); }
.remove svg { width: 10px; height: 10px; fill: none; stroke: #bdbdbd; stroke-width: 2; }
.shapes { display: grid; grid-template-columns: repeat(3, 54px); grid-auto-rows: 54px; padding: 9px 10px; }
.shapes svg { width: 54px; height: 54px; }
.cats { border-top: 1px solid #e0e0e0; }
.cats li { display: flex; align-items: center; height: 33px; padding: 0 15px 0 6px; border-bottom: 1px solid #e0e0e0; color: #111; }
.cats li:last-child { padding-left: 8px; }
.cats span { flex: 1; }
.more { display: flex; flex: none; height: 30px; padding-bottom: 2px; border-top: 2px solid #3f6fa9; background: #235695; color: #dbe5f1; box-shadow: 0 -2px 0 #dcdcdc; }
.more-label { flex: 1; padding-left: 15px; text-align: left; }
.more-icon { width: 31px; border-left: 1px solid #4272ab; }
.more-icon svg { width: 14px; height: 18px; margin: auto; }

.doc { display: flex; flex-direction: column; flex: 1; min-width: 0; margin: 7px 0 0 2px; border-radius: 4px 0 0; background: #fff; }
h1 { display: flex; align-items: center; flex: none; gap: 5px; height: 48px; padding: 0 13px 4px; font-size: 18px; line-height: 24px; color: #000; }
h1 span { color: #b3b3b3; }
h1 svg { width: 13px; height: 16px; }
.view { display: flex; flex: 1; min-height: 0; }
.canvas { position: relative; flex: 1; overflow: hidden; background: linear-gradient(#e8e8fd 1px, transparent 1px) 0 0 / 10px 10px, linear-gradient(90deg, #e8e8fd 1px, transparent 1px) 0 0 / 10px 10px, linear-gradient(#f3f3fe 1px, transparent 1px) 0 5px / 10px 10px, linear-gradient(90deg, #f3f3fe 1px, #fff 1px) 5px 0 / 10px 10px; }
.edges { position: absolute; inset: 0; width: 100%; height: 100%; }
.edges path { fill: none; stroke: #64307f; stroke-width: 1; }
.node { position: absolute; display: flex; flex-direction: column; align-items: center; justify-content: center; border: 1px solid #652d80; background: #dfd7e5; font-size: 6px; line-height: 7px; }
.line { height: 7px; white-space: pre; }
.slate { color: #5a5470; }
.plum { color: #6d5080; }
.ink { color: #484350; }
.vbar { display: flex; flex-direction: column; align-items: center; flex: none; width: 17px; background: #f1f1f1; }
.vthumb { width: 13px; height: 310px; margin: 6px 0 auto; background: #c1c1c1; }
.arrow { flex: none; border: 4px solid transparent; }
.arrow.up { margin-top: 7px; border-top: 0; border-bottom-color: #a3a3a3; }
.arrow.down { margin-bottom: 7px; border-bottom: 0; border-top-color: #505050; }
.arrow.left { margin: 0 6px 0 7px; border-left: 0; border-right-color: #a3a3a3; }
.arrow.right { margin: 0 7px 0 6px; border-right: 0; border-left-color: #505050; }
.hbar { display: flex; align-items: center; flex: none; height: 17px; background: #f1f1f1; }
.htrack { flex: 1; }
.hthumb { width: 67.7%; height: 13px; background: #c1c1c1; }
.corner { width: 17px; height: 17px; background: #fff; }
.promo { display: flex; align-items: center; flex: none; height: 38px; padding: 0 10px 2px; background: #225395; color: #fff; }
.promo a { display: flex; align-items: center; gap: 10px; margin-right: 18px; color: #f3f04f; font-weight: 700; text-decoration: none; }
.promo svg { width: 12px; height: 12px; }
.promo button { margin-left: auto; }

.taskbar { display: flex; align-items: center; flex: none; height: 40px; gap: 2px; border-top: 1px solid #45536a; box-shadow: inset 0 1px 0 #cbdbed; background: linear-gradient(90deg, #8293ab 0, #8293ab 50px, #a7c0dc 80px, #a7c0dc calc(100% - 220px), #8293ab calc(100% - 185px)); }
.start { width: 57px; padding-left: 8px; }
.start svg, .task svg { width: 38px; height: 38px; }
.task { display: flex; align-items: center; justify-content: center; width: 60px; height: 38px; }
.task svg { height: 36px; width: 36px; }
.open { border: 1px solid #35435a; border-radius: 3px; background: linear-gradient(150deg, #d9e3ef, #aec4de 60%); box-shadow: inset 0 0 0 1px #e4edf7; }
.lit { background: linear-gradient(150deg, #f0f5fa, #ccd9e8 60%); order: 2; }
.spotify { order: 1; background: radial-gradient(circle at 50% 100%, #ee8440, #f3b85a 55%, #f7ee8c); }
.task.open:not(.spotify):not(.lit) { order: 3; }
.taskbar .spring, .tray, .peek { order: 4; }
.tray { display: flex; align-items: center; gap: 6px; color: #fff; }
.tray svg { width: 18px; height: 18px; }
.tray .tray-up { width: 10px; height: 6px; margin-right: 3px; }
.tray time { margin: 0 4px 0 7px; text-align: center; font: 11px/17px "Open Sans", "Noto Sans", sans-serif; }
.peek { width: 15px; height: 38px; border: 1px solid #b5c2d2; background: linear-gradient(#a0adbe, #54627a 40%, #6f8199); }
</style>
